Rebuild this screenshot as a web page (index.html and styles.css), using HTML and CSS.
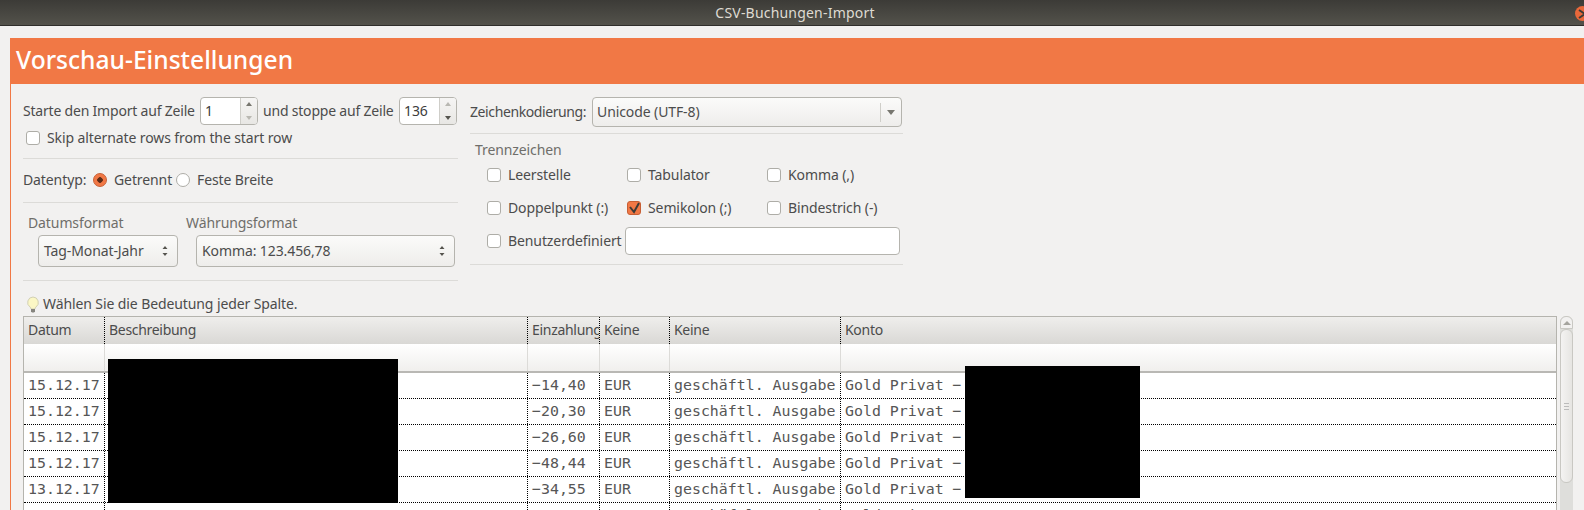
FILE: index.html
```html
<!DOCTYPE html>
<html lang="de">
<head>
<meta charset="utf-8">
<title>CSV-Buchungen-Import</title>
<link rel="stylesheet" href="styles.css">
</head>
<body>
<header class="titlebar">
  <span class="title">CSV-Buchungen-Import</span>
  <span class="close"><svg viewBox="0 0 10 10" width="10" height="10"><path d="M1 1l6 4-6 4" fill="none" stroke="#3c3b37" stroke-width="2"/></svg></span>
</header>
<main class="page">
  <h1 class="banner">Vorschau-Einstellungen</h1>
  <div class="body">
    <div class="settings">
      <section class="left">
        <div class="row range">
          <label class="l1">Starte den Import auf Zeile</label>
          <span class="spin"><span class="spin-val">1</span><span class="spin-btns"><svg viewBox="0 0 16 13" width="16" height="13"><path d="M5 8l3-4 3 4z" fill="#77766f"/></svg><svg viewBox="0 0 16 13" width="16" height="13"><path d="M5 5l3 4 3-4z" fill="#b9b8b2"/></svg></span></span>
          <label class="l2">und stoppe auf Zeile</label>
          <span class="spin"><span class="spin-val">136</span><span class="spin-btns"><svg viewBox="0 0 16 13" width="16" height="13"><path d="M5 8l3-4 3 4z" fill="#b9b8b2"/></svg><svg viewBox="0 0 16 13" width="16" height="13"><path d="M5 5l3 4 3-4z" fill="#55544e"/></svg></span></span>
        </div>
        <div class="row skip"><span class="check"></span><label>Skip alternate rows from the start row</label></div>
        <hr class="rule r1">
        <div class="row datatype">
          <label class="l3">Datentyp:</label>
          <span class="radio on"></span><label class="radio-label rl1">Getrennt</label>
          <span class="radio"></span><label class="radio-label">Feste Breite</label>
        </div>
        <hr class="rule">
        <div class="formats">
          <div class="format fmt-a">
            <div class="caption cap-a">Datumsformat</div>
            <div class="combo date"><span>Tag-Monat-Jahr</span><svg class="updown" viewBox="0 0 8 14" width="8" height="14"><path d="M1.500 5l2.500-3 2.500 3zM1.500 9l2.500 3 2.500-3z" fill="#55544e"/></svg></div>
          </div>
          <div class="format">
            <div class="caption cap-b">Währungsformat</div>
            <div class="combo money"><span>Komma: 123.456,78</span><svg class="updown" viewBox="0 0 8 14" width="8" height="14"><path d="M1.500 5l2.500-3 2.500 3zM1.500 9l2.500 3 2.500-3z" fill="#55544e"/></svg></div>
          </div>
        </div>
        <hr class="rule">
      </section>
      <section class="right">
        <div class="row enc">
          <label class="l4">Zeichenkodierung:</label>
          <div class="combo encoding"><span>Unicode (UTF-8)</span><span class="enc-btn"><svg viewBox="0 0 10 6" width="10" height="6"><path d="M1 1h8l-4 5z" fill="#77766f"/></svg></span></div>
        </div>
        <hr class="rule rule-enc">
        <div class="caption sep-title">Trennzeichen</div>
        <div class="seps">
          <div class="sep"><span class="check"></span><label>Leerstelle</label></div>
          <div class="sep"><span class="check"></span><label>Tabulator</label></div>
          <div class="sep"><span class="check"></span><label>Komma (,)</label></div>
          <div class="sep"><span class="check"></span><label>Doppelpunkt (:)</label></div>
          <div class="sep"><span class="check on"><svg viewBox="0 0 14 14" width="14" height="14"><path d="M3 6l4 5 5-9" fill="none" stroke="#3c3b37" stroke-width="2"/></svg></span><label>Semikolon (;)</label></div>
          <div class="sep"><span class="check"></span><label>Bindestrich (-)</label></div>
        </div>
        <div class="row custom"><span class="check"></span><label class="l5">Benutzerdefiniert</label><span class="entry"></span></div>
        <hr class="rule r4">
      </section>
    </div>
    <div class="hint"><svg viewBox="0 0 14 17" width="14" height="17"><path d="M7 1a5.500 5.500 0 0 0-3 10c.6.5 1 1.200 1 2h4c0-.8.400-1.500 1-2a5.500 5.500 0 0 0-3-10z" fill="#fbf7c5" stroke="#d2d0b4"/><path d="M5 13h4v2.500l-1 1h-2l-1-1z" fill="#86857f"/></svg><span>Wählen Sie die Bedeutung jeder Spalte.</span></div>
    <div class="table-area">
      <div class="table">
        <div class="thead">
          <div class="tr"><div class="c c1">Datum</div><div class="c c2">Beschreibung</div><div class="c c3">Einzahlung</div><div class="c c4">Keine</div><div class="c c5">Keine</div><div class="c c6">Konto</div></div>
        </div>
        <div class="filter"><div class="c c1"></div><div class="c c2"></div><div class="c c3"></div><div class="c c4"></div><div class="c c5"></div><div class="c c6"></div></div>
        <div class="tbody">
          <div class="tr"><div class="c c1">15.12.17</div><div class="c c2"></div><div class="c c3">−14,40</div><div class="c c4">EUR</div><div class="c c5">geschäftl. Ausgabe</div><div class="c c6">Gold Privat −</div></div>
          <div class="tr"><div class="c c1">15.12.17</div><div class="c c2"></div><div class="c c3">−20,30</div><div class="c c4">EUR</div><div class="c c5">geschäftl. Ausgabe</div><div class="c c6">Gold Privat −</div></div>
          <div class="tr"><div class="c c1">15.12.17</div><div class="c c2"></div><div class="c c3">−26,60</div><div class="c c4">EUR</div><div class="c c5">geschäftl. Ausgabe</div><div class="c c6">Gold Privat −</div></div>
          <div class="tr"><div class="c c1">15.12.17</div><div class="c c2"></div><div class="c c3">−48,44</div><div class="c c4">EUR</div><div class="c c5">geschäftl. Ausgabe</div><div class="c c6">Gold Privat −</div></div>
          <div class="tr"><div class="c c1">13.12.17</div><div class="c c2"></div><div class="c c3">−34,55</div><div class="c c4">EUR</div><div class="c c5">geschäftl. Ausgabe</div><div class="c c6">Gold Privat −</div></div>
          <div class="tr"><div class="c c1"></div><div class="c c2"></div><div class="c c3"></div><div class="c c4"></div><div class="c c5">geschäftl. Ausgabe</div><div class="c c6">Gold Privat −</div></div>
        </div>
        <div class="redact redact-a"></div>
        <div class="redact redact-b"></div>
      </div>
      <div class="scrollbar">
        <div class="sb-arrow"><svg viewBox="0 0 8 5" width="8" height="5"><path d="M0 5l4-4 4 4z" fill="#a5a49e"/></svg></div>
        <div class="sb-thumb"><span class="grip"></span></div>
      </div>
    </div>
  </div>
</main>
</body>
</html>
```
FILE: styles.css
```css
* { box-sizing: border-box; }
html, body { margin: 0; padding: 0; height: 510px; overflow: hidden; }
body { background: #f2f1f0; color: #4c4c4c; font: 14px/18px "Noto Sans", sans-serif; letter-spacing: -0.1px; }
label { white-space: nowrap; display: block; flex: none; }

.titlebar { height: 26px; background: linear-gradient(#3c3b37, #53524b); border-bottom: 1px solid #2f2e2b; display: flex; align-items: center; justify-content: center; position: relative; }
.title { color: #dfdbd2; font-size: 14px; letter-spacing: 0.2px; margin-left: 6px; }
.close { position: absolute; right: -6px; top: 6px; width: 15px; height: 15px; border-radius: 50%; background: #e9683a; display: flex; align-items: center; justify-content: center; }

.page { margin: 12px 0 0 10px; border-left: 1px solid #f17845; height: 472px; }
.banner { margin: 0 0 0 -1px; height: 46px; background: #f17845; color: #fff; font-size: 24.6px; line-height: 44px; font-weight: 500; letter-spacing: 0; padding-left: 6px; }
.body { padding: 13px 0 0 12px; }
.settings { display: flex; height: 198px; }
.left { width: 435px; flex: none; }
.right { width: 433px; flex: none; margin-left: 12px; }
.row { display: flex; align-items: center; }
.range { height: 28px; }
.l1 { width: 171px; letter-spacing: -0.2px; }
.l2 { width: 130px; letter-spacing: -0.2px; }
.l3 { width: 63px; }
.l4 { width: 117px; letter-spacing: -0.4px; }
.l5 { width: 113px; }
.spin { flex: none; width: 58px; height: 28px; background: #fff; border: 1px solid #b5b4ae; border-radius: 4px; display: flex; color: #3c3c3c; margin: 0 5px 0 6px; }
.spin-val { flex: 1; padding: 4px; }
.spin-btns { width: 17px; border-left: 1px solid #cfcec9; background: linear-gradient(#f6f5f4, #e8e7e4); border-radius: 0 3px 3px 0; display: flex; flex-direction: column; }
.skip { margin: 2px 0 0 3px; height: 22px; gap: 7px; }
.check { flex: none; width: 14px; height: 14px; background: #fff; border: 1px solid #aeada7; border-radius: 3px; display: inline-block; }
.check.on { background: #f17845; border-color: #c75f34; }
.check svg { display: block; margin: -1px; }
.rule { border: 0; border-top: 1px solid #dcdbd8; margin: 0; }
.r1 { margin-top: 9px; }
.datatype { height: 43px; padding-bottom: 2px; }
.radio { flex: none; width: 14px; height: 14px; border-radius: 50%; border: 1px solid #aeada7; background: #fff; margin-left: 7px; }
.radio.on { background: radial-gradient(circle, #5c2b16 0 2.500px, #f17845 3px); border-color: #c75f34; }
.radio-label { margin-left: 7px; }
.rl1 { width: 55px; }
.formats { display: flex; height: 77px; }
.format { display: flex; flex-direction: column; }
.fmt-a { width: 163px; }
.caption { color: #6f6e6a; }
.cap-a { margin: 11px 0 3px 5px; }
.cap-b { margin: 11px 0 3px 0; }
.combo { height: 32px; border: 1px solid #b5b4ae; border-radius: 4px; background: linear-gradient(#fbfbfa, #eeedeb); display: flex; align-items: center; justify-content: space-between; padding: 0 5px; }
.date { width: 140px; margin-left: 15px; }
.money { width: 259px; margin-left: 10px; }
.updown { margin-right: 3px; }
.enc { height: 30px; }
.encoding { width: 310px; height: 30px; margin-left: 5px; padding: 0 0 0 4px; }
.enc-btn { width: 21px; height: 19px; border-left: 1px solid #cfcec9; display: flex; align-items: center; justify-content: center; }
.rule-enc { margin-top: 6px; }
.sep-title { margin: 7px 0 0 5px; }
.seps { display: grid; grid-template-columns: 140px 140px 140px; row-gap: 15px; padding: 7px 0 0 17px; }
.sep { display: flex; align-items: center; gap: 7px; height: 18px; }
.custom { margin: 10px 0 0 17px; gap: 7px; height: 28px; }
.custom .l5 { margin-right: -3px; }
.entry { width: 275px; height: 28px; background: #fff; border: 1px solid #b5b4ae; border-radius: 4px; flex: none; }
.r4 { margin-top: 9px; }

.hint { display: flex; align-items: center; height: 18px; margin: 0 0 0 3px; gap: 3px; }
.table-area { display: flex; margin-top: 3px; }
.table { width: 1534px; height: 194px; border: 1px solid #b5b4ae; border-bottom: 0; background: #fff; position: relative; overflow: hidden; }
.tr, .filter { display: flex; }
.thead .tr { height: 27px; background: linear-gradient(#efeeec, #d9d8d5); line-height: 25px; letter-spacing: -0.3px; }
.filter { height: 29px; background: linear-gradient(#fff, #f0efed); border-bottom: 2px solid #b9b8b4; }
.c { flex: none; padding-left: 4px; white-space: nowrap; overflow: hidden; border-right: 1px dotted #000; }
.filter .c { border-right: 1px solid #dcdbd8; }
.c1 { width: 81px; }
.c2 { width: 423px; }
.c3 { width: 72px; }
.c4 { width: 70px; }
.c5 { width: 171px; }
.c6 { flex: 1; border-right: 0; }
.filter .c6 { border-right: 0; }
.tbody .tr { height: 26px; font: 14.9px/25px "DejaVu Sans Mono", monospace; letter-spacing: 0; color: #565656; border-bottom: 1px dotted #000; }
.redact { position: absolute; background: #000; }
.redact-a { left: 84px; top: 42px; width: 290px; height: 144px; }
.redact-b { left: 941px; top: 49px; width: 175px; height: 132px; }

.scrollbar { width: 13px; margin-left: 3px; height: 194px; background: #dededb; border-radius: 6px 6px 0 0; }
.sb-arrow { height: 13px; background: #f2f1f0; border: 1px solid #c9c8c3; border-radius: 6px 6px 0 0; display: flex; align-items: center; justify-content: center; }
.sb-thumb { height: 154px; background: linear-gradient(90deg, #f4f3f2, #e6e5e2); border: 1px solid #c9c8c3; border-radius: 6px; display: flex; align-items: center; justify-content: center; }
.grip { width: 5px; height: 7px; border-top: 1px solid #bbb; border-bottom: 1px solid #bbb; background: linear-gradient(#bbb, #bbb) center/5px 1px no-repeat; }
```
